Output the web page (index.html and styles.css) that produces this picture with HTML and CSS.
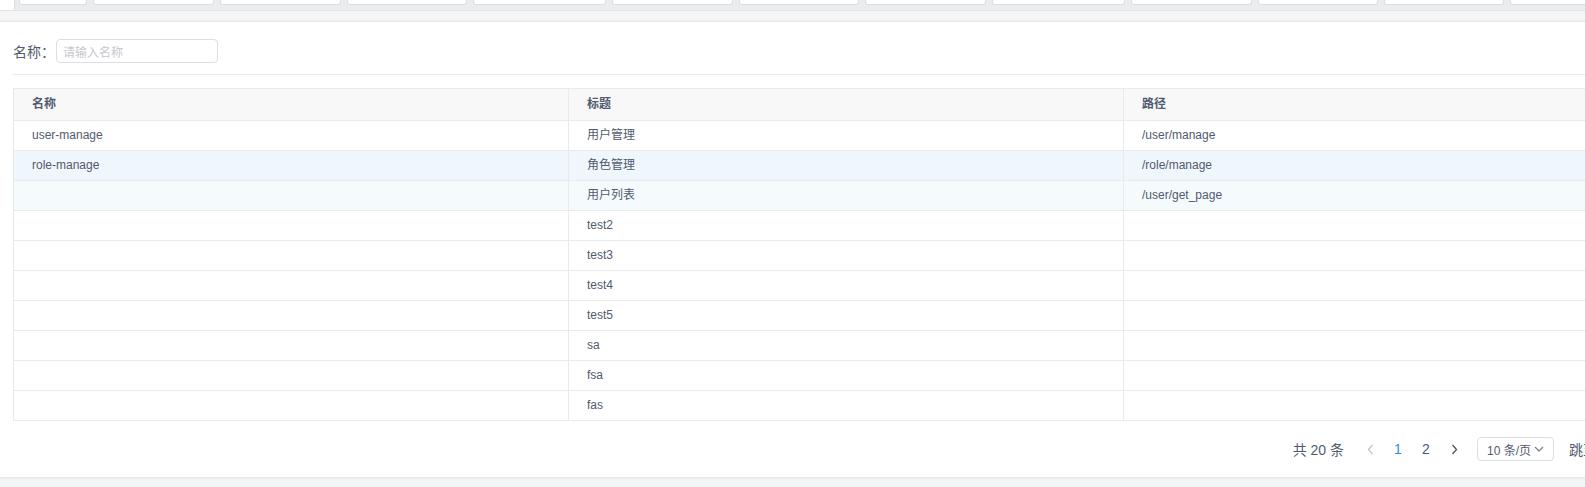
FILE: index.html
```html
<!DOCTYPE html>
<html lang="zh-CN">
<head>
<meta charset="utf-8">
<title>菜单列表</title>
<link rel="stylesheet" href="styles.css">
</head>
<body>
<div class="tabs-bar">
  <div class="tabs-left"></div>
  <div class="tab tab-xs"></div>
  <div class="tab tab-m"></div>
  <div class="tab tab-m"></div>
  <div class="tab tab-s"></div>
  <div class="tab tab-l"></div>
  <div class="tab tab-m"></div>
  <div class="tab tab-s"></div>
  <div class="tab tab-m"></div>
  <div class="tab tab-l"></div>
  <div class="tab tab-m"></div>
  <div class="tab tab-s"></div>
  <div class="tab tab-s"></div>
  <div class="tab tab-s"></div>
</div>
<div class="page">
  <div class="card">
    <div class="search">
      <label class="search-label">名称：</label>
      <input class="search-input" type="text" placeholder="请输入名称">
    </div>
    <div class="divider"></div>
    <table class="grid">
      <thead>
        <tr><th>名称</th><th>标题</th><th>路径</th></tr>
      </thead>
      <tbody>
        <tr><td>user-manage</td><td>用户管理</td><td>/user/manage</td></tr>
        <tr class="row-hover"><td>role-manage</td><td>角色管理</td><td>/role/manage</td></tr>
        <tr class="row-light"><td></td><td>用户列表</td><td>/user/get_page</td></tr>
        <tr><td></td><td>test2</td><td></td></tr>
        <tr><td></td><td>test3</td><td></td></tr>
        <tr><td></td><td>test4</td><td></td></tr>
        <tr><td></td><td>test5</td><td></td></tr>
        <tr><td></td><td>sa</td><td></td></tr>
        <tr><td></td><td>fsa</td><td></td></tr>
        <tr><td></td><td>fas</td><td></td></tr>
      </tbody>
    </table>
    <div class="pager">
      <span class="pager-total">共 20 条</span>
      <span class="pager-item pager-arrow disabled">
        <svg width="7" height="11" viewBox="0 0 7 11"><path d="M5.5 1 L1.5 5.5 L5.5 10" fill="none" stroke="currentColor" stroke-width="1.4"/></svg>
      </span>
      <span class="pager-item active">1</span>
      <span class="pager-item">2</span>
      <span class="pager-item pager-arrow">
        <svg width="7" height="11" viewBox="0 0 7 11"><path d="M1.5 1 L5.5 5.5 L1.5 10" fill="none" stroke="currentColor" stroke-width="1.4"/></svg>
      </span>
      <span class="pager-select">
        <span class="pager-select-text">10 条/页</span>
        <svg class="pager-select-arrow" width="10" height="6" viewBox="0 0 10 6"><path d="M1 1 L5 5 L9 1" fill="none" stroke="currentColor" stroke-width="1.3"/></svg>
      </span>
      <span class="pager-jump">跳至 <input class="pager-jump-input" type="text"> 页</span>
    </div>
  </div>
</div>
</body>
</html>
```

FILE: styles.css
```css
html, body {
  margin: 0;
  padding: 0;
  overflow: hidden;
}
body {
  width: 1700px;
  background: #f4f5f7;
  font-family: "Liberation Sans", Arial, "Noto Sans CJK SC", sans-serif;
  color: #515a6e;
}

/* top tabs strip */
.tabs-bar {
  display: flex;
  gap: 6px;
  height: 10px;
  background: #ebecee;
  border-bottom: 1px solid #e3e4e6;
  overflow: hidden;
}
.tabs-left {
  width: 14px;
  height: 10px;
  background: #fff;
  border-right: 1px solid #dcdde0;
  margin-right: -2px;
  flex: none;
}
.tab {
  flex: none;
  height: 5px;
  background: #fff;
  border: 1px solid #dddee1;
  border-top: none;
  border-radius: 0 0 3px 3px;
  box-sizing: border-box;
}
.tab-xs { width: 68px; }
.tab-s { width: 120px; }
.tab-m { width: 121px; }
.tab-l { width: 133px; }

/* page */
.page {
  padding: 11px 0 10px 0;
}
.card {
  width: 1692px;
  box-sizing: border-box;
  background: #fff;
  padding: 17px 13px 16px 13px;
  box-shadow: 0 0 2px 1px rgba(0, 0, 0, 0.08);
}

.search {
  display: flex;
  align-items: center;
  height: 24px;
}
.search-label {
  font-size: 14px;
  color: #515a6e;
  font-family: "Noto Sans CJK SC", sans-serif;
  width: 43px;
}
.search-input {
  width: 162px;
  height: 24px;
  box-sizing: border-box;
  border: 1px solid #dcdee2;
  border-radius: 4px;
  padding: 0 6px;
  font-size: 12px;
  font-family: "Noto Sans CJK SC", sans-serif;
  color: #515a6e;
  outline: none;
}
.search-input::placeholder {
  color: #c5c8ce;
}

.divider {
  height: 1px;
  background: #e8eaec;
  margin-top: 11px;
}

/* table */
.grid {
  margin-top: 13px;
  border-collapse: separate;
  border-spacing: 0;
  border-top: 1px solid #e8eaec;
  border-left: 1px solid #e8eaec;
  table-layout: fixed;
  width: 1666px;
  font-size: 12px;
}
.grid th,
.grid td {
  width: 536px;
  padding: 0 0 0 18px;
  border-right: 1px solid #e8eaec;
  border-bottom: 1px solid #e8eaec;
  text-align: left;
  color: #515a6e;
  white-space: nowrap;
}
.grid th {
  background: #f8f8f9;
  font-weight: bold;
  line-height: 31px;
  height: 31px;
}
.grid td {
  line-height: 29px;
  height: 29px;
  background: #fff;
}
.grid .row-hover td {
  background: #eff7fd;
}
.grid .row-light td {
  background: #f5fafd;
}

/* pager */
.pager {
  display: flex;
  align-items: center;
  justify-content: flex-end;
  margin-top: 16px;
  margin-right: 2px;
  height: 24px;
  font-size: 14px;
}
.pager-total {
  margin-right: 14px;
  color: #515a6e;
}
.pager-item {
  width: 24px;
  height: 24px;
  line-height: 24px;
  text-align: center;
  margin-right: 4px;
  color: #515a6e;
  display: flex;
  align-items: center;
  justify-content: center;
}
.pager-item.active {
  color: #2d8cf0;
}
.pager-arrow {
  color: #515a6e;
}
.pager-arrow.disabled {
  color: #c5c8ce;
}
.pager-select {
  margin-left: 7px;
  width: 77px;
  height: 24px;
  box-sizing: border-box;
  border: 1px solid #dcdee2;
  border-radius: 4px;
  display: flex;
  align-items: center;
  padding-left: 9px;
  font-size: 12px;
  color: #515a6e;
}
.pager-select-text {
  flex: 1;
}
.pager-select-arrow {
  color: #808695;
  margin-right: 9px;
}
.pager-jump {
  margin-left: 15px;
  display: flex;
  align-items: center;
  white-space: nowrap;
}
.pager-jump-input {
  width: 50px;
  height: 24px;
  box-sizing: border-box;
  border: 1px solid #dcdee2;
  border-radius: 4px;
  margin: 0 8px;
}
```
